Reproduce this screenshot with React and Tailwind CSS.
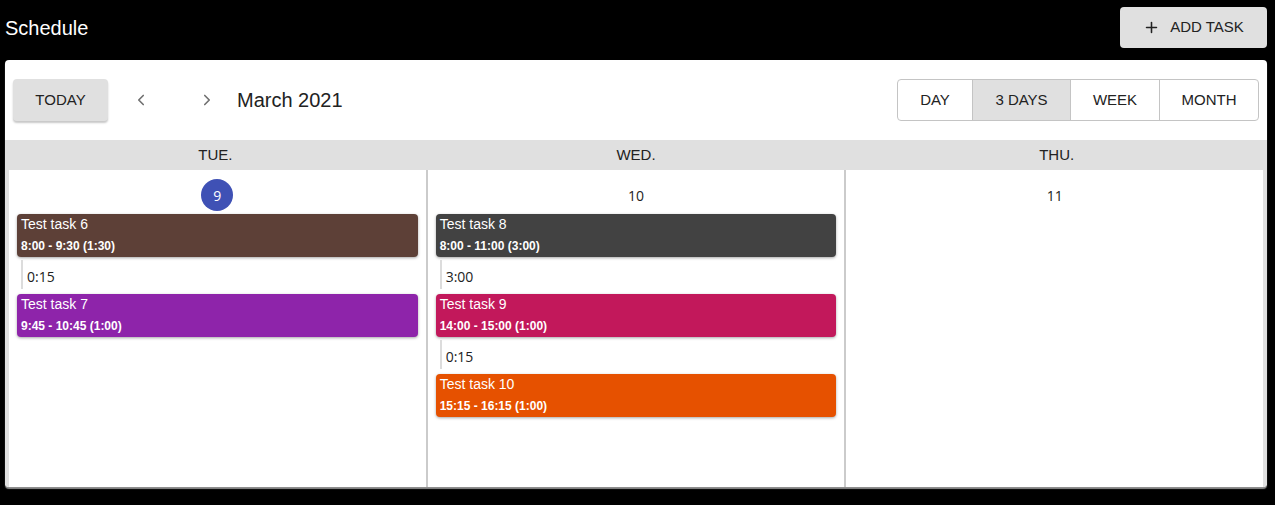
import { ChevronLeft, ChevronRight, Plus } from "lucide-react";

const days = [
  {
    name: "TUE.",
    date: "9",
    today: true,
    items: [
      { type: "task", title: "Test task 6", time: "8:00 - 9:30 (1:30)", color: "bg-[#5d4037]" },
      { type: "gap", label: "0:15" },
      { type: "task", title: "Test task 7", time: "9:45 - 10:45 (1:00)", color: "bg-[#8e24aa]" },
    ],
  },
  {
    name: "WED.",
    date: "10",
    items: [
      { type: "task", title: "Test task 8", time: "8:00 - 11:00 (3:00)", color: "bg-[#424242]" },
      { type: "gap", label: "3:00" },
      { type: "task", title: "Test task 9", time: "14:00 - 15:00 (1:00)", color: "bg-[#c2185b]" },
      { type: "gap", label: "0:15" },
      { type: "task", title: "Test task 10", time: "15:15 - 16:15 (1:00)", color: "bg-[#e65100]" },
    ],
  },
  { name: "THU.", date: "11", items: [] },
];

const views = ["DAY", "3 DAYS", "WEEK", "MONTH"];

function TaskCard({ task }) {
  return (
    <div
      className={`mx-[8px] h-[43px] rounded-[4px] px-[4px] pt-[2px] text-white shadow-[0_1px_3px_rgba(0,0,0,0.35)] ${task.color}`}
    >
      <div className="text-[14px] leading-[16px]">{task.title}</div>
      <div className="mt-[7px] text-[12px] font-bold leading-[14px]">{task.time}</div>
    </div>
  );
}

function Gap({ label }) {
  return (
    <div className="mx-[12px] mt-[3px] mb-[5px] flex h-[29px] items-center border-l-2 border-[#dcdcdc] pl-[4px] pt-[3px] font-['Open_Sans',sans-serif] text-[14px] text-[#222]">
      {label}
    </div>
  );
}

export default function App() {
  return (
    <div className="h-[505px] w-[1275px] bg-black font-['Liberation_Sans',Arial,sans-serif]">
      {/* top bar */}
      <div className="flex h-[60px] items-start justify-between pr-[8px]">
        <h1 className="pl-[5px] pt-[15px] text-[20px] leading-[26px] text-white">Schedule</h1>
        <button className="mt-[7px] flex h-[41px] w-[147px] items-center justify-center gap-[10px] rounded-[4px] bg-[#e0e0e0] text-[15px] text-[#222]">
          <Plus size={17} strokeWidth={2.2} className="text-[#222]" />
          ADD TASK
        </button>
      </div>

      {/* paper */}
      <div className="mx-[5px] h-[427px] w-[1262px] overflow-hidden rounded-[4px] bg-white shadow-[0_2px_1px_rgba(150,150,150,0.95)]">
        {/* toolbar */}
        <div className="flex h-[80px] items-center justify-between pl-[8px] pr-[8px]">
          <div className="flex items-center">
            <button className="h-[42px] w-[95px] rounded-[4px] bg-[#e0e0e0] text-[15px] text-[#222] shadow-[0_2px_2px_rgba(0,0,0,0.22)]">
              TODAY
            </button>
            <div className="ml-[24px] flex w-[84px] items-center justify-between">
              <ChevronLeft size={18} strokeWidth={2.2} className="text-[#707070]" />
              <ChevronRight size={18} strokeWidth={2.2} className="text-[#707070]" />
            </div>
            <div className="ml-[21px] text-[20px] text-[#222]">March 2021</div>
          </div>
          <div className="flex h-[42px] overflow-hidden rounded-[4px] border border-[#c4c4c4] text-[15px] text-[#222]">
            {views.map((v, i) => (
              <div
                key={v}
                className={`flex items-center justify-center ${i > 0 ? "border-l border-[#c4c4c4]" : ""} ${
                  v === "3 DAYS" ? "w-[98px] bg-[#e0e0e0]" : v === "DAY" ? "w-[74px]" : v === "WEEK" ? "w-[89px]" : "w-[99px]"
                }`}
              >
                {v}
              </div>
            ))}
          </div>
        </div>

        {/* day headers */}
        <div className="grid h-[30px] grid-cols-3 bg-[#e0e0e0] text-[15px] text-[#222]">
          {days.map((d) => (
            <div key={d.name} className="flex items-center justify-center">
              {d.name}
            </div>
          ))}
        </div>

        {/* day cells */}
        <div className="flex h-[317px] bg-[#e0e0e0] px-[4px]">
          {days.map((d, i) => (
            <div
              key={d.name}
              className={`flex-1 bg-white ${i > 0 ? "border-l-2 border-[#cbcbcb]" : ""}`}
            >
              <div className="flex justify-center pt-[9px] pb-[3px]">
                {d.today ? (
                  <div className="flex h-[32px] w-[32px] items-center justify-center rounded-full bg-[#3f51b5] font-['Open_Sans',sans-serif] text-[14px] text-white">
                    {d.date}
                  </div>
                ) : (
                  <div className="flex h-[32px] items-center font-['Open_Sans',sans-serif] text-[14px] text-[#222]">
                    {d.date}
                  </div>
                )}
              </div>
              {d.items.map((it, k) =>
                it.type === "task" ? <TaskCard key={k} task={it} /> : <Gap key={k} label={it.label} />
              )}
            </div>
          ))}
        </div>
      </div>
    </div>
  );
}
